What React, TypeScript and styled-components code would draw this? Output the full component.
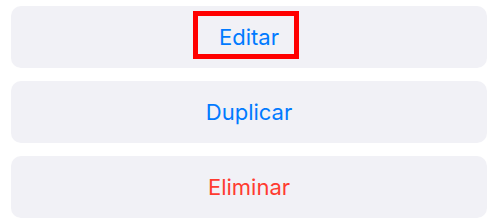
import styled, { createGlobalStyle } from "styled-components";

const GlobalStyle = createGlobalStyle`
  html, body {
    margin: 0;
    padding: 0;
    background: #ffffff;
    font-family: Inter, "Noto Sans", sans-serif;
  }
`;

const SSheet = styled.div`
  display: flex;
  flex-direction: column;
  gap: 13px;
  padding: 6px 13px 0 11px;
  width: 500px;
  box-sizing: border-box;
`;

const SAction = styled.button<{ $danger?: boolean }>`
  position: relative;
  display: flex;
  align-items: center;
  justify-content: center;
  height: 62px;
  border: none;
  border-radius: 10px;
  background: #f1f1f6;
  color: ${(p) => (p.$danger ? "#ff3b30" : "#007aff")};
  font-family: Inter, "Noto Sans", sans-serif;
  font-size: 22px;
  font-weight: 400;
  padding: 0;
  cursor: pointer;
`;

const SHighlight = styled.span`
  position: absolute;
  left: 182px;
  top: 5px;
  width: 106px;
  height: 48px;
  box-sizing: border-box;
  border: 5px solid #ff0000;
  pointer-events: none;
`;

const App = () => {
  return (
    <>
      <GlobalStyle />
      <SSheet>
        <SAction>
          Editar
          <SHighlight />
        </SAction>
        <SAction>Duplicar</SAction>
        <SAction $danger>Eliminar</SAction>
      </SSheet>
    </>
  );
};

export default App;
